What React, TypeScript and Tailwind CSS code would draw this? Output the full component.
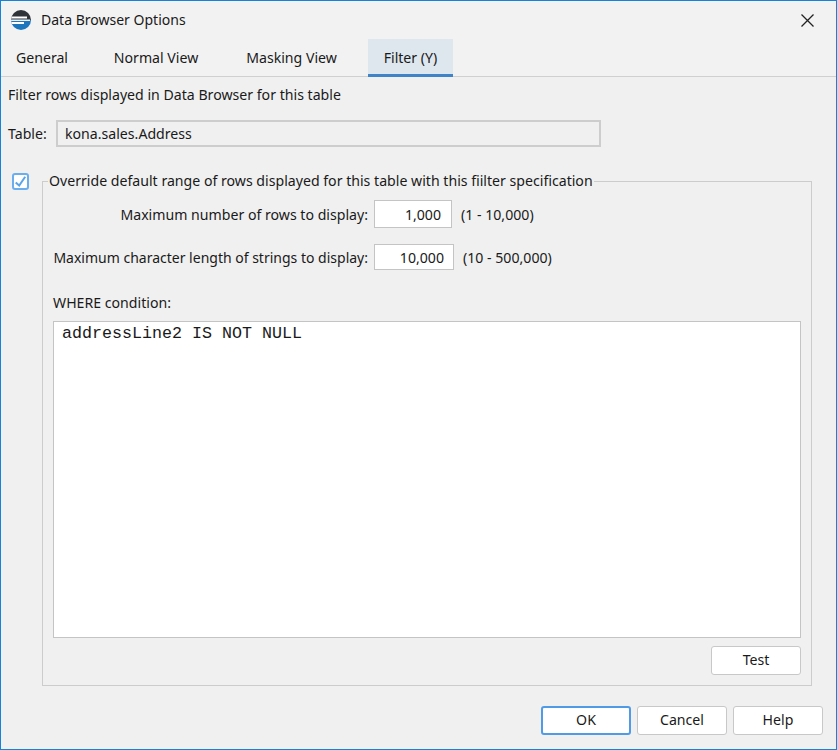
const tabs = [
    { label: 'General', width: 'w-[82px]' },
    { label: 'Normal View', width: 'w-[146px]' },
    { label: 'Masking View', width: 'w-[125px]' },
];

function AppIcon() {
    return (
        <svg width="22" height="22" viewBox="0 0 22 22" className="shrink-0">
            <defs>
                <clipPath id="globe">
                    <circle cx="11" cy="11" r="10" />
                </clipPath>
            </defs>
            <g clipPath="url(#globe)">
                <rect x="0" y="0" width="22" height="11" fill="#2f3338" />
                <rect x="0" y="11" width="22" height="11" fill="#1b76bd" />
                <rect x="0" y="7.5" width="17" height="2" fill="#ffffff" />
                <rect x="0" y="10.5" width="20" height="1.5" fill="#e8eef4" />
                <rect x="0" y="13" width="14" height="2" fill="#ffffff" />
            </g>
        </svg>
    );
}

function Button({ label, primary }: { label: string; primary?: boolean }) {
    return (
        <button
            className={
                primary
                    ? 'h-[29px] w-[90px] rounded-[3px] border-2 border-[#4f9be8] bg-white pb-[2px] text-[#1a1a1a]'
                    : 'h-[29px] w-[90px] rounded-[3px] border border-[#c8c8c8] bg-white pb-[2px] text-[#1a1a1a]'
            }
        >
            {label}
        </button>
    );
}

export default function App() {
    return (
        <div className="flex h-[750px] w-[837px] flex-col border border-[#1583d8] bg-[#f0f0f0] font-['Noto_Sans',sans-serif] text-[14.13px] text-[#1a1a1a]">
            <div className="flex h-[38px] shrink-0 items-center bg-[#f2f2f2] pl-[9px] pr-[22px]">
                <AppIcon />
                <span className="ml-[9px] text-[14.02px]">Data Browser Options</span>
                <svg width="13" height="13" viewBox="0 0 13 13" className="ml-auto">
                    <path d="M0.5 0.5 L12.5 12.5 M12.5 0.5 L0.5 12.5" fill="none" stroke="#222222" strokeWidth="1.3" />
                </svg>
            </div>

            <div className="flex h-[38px] shrink-0 border-b border-[#d0d0d0] bg-[#f2f2f2]">
                {tabs.map((tab) => (
                    <div key={tab.label} className={`${tab.width} flex items-center justify-center pt-[1px]`}>
                        {tab.label}
                    </div>
                ))}
                <div className="ml-[14px] flex h-[38px] w-[85px] items-center justify-center border-b-[3px] border-[#3f83c9] bg-[#dee6ee] pt-[3px]">
                    Filter (Y)
                </div>
            </div>

            <div className="flex min-h-0 flex-1 flex-col pl-[7px] pr-[13px]">
                <div className="mt-[7px] leading-[22px]">Filter rows displayed in Data Browser for this table</div>

                <div className="mt-[14px] flex items-center">
                    <span className="w-[48px]">Table:</span>
                    <div className="flex h-[27px] w-[545px] items-center border-2 border-[#cdcdcd] pl-[7px]">
                        kona.sales.Address
                    </div>
                </div>

                <div className="mt-[24px] flex">
                    <div className="ml-[4px] mt-[2px] flex h-[17px] w-[17px] shrink-0 items-start justify-start rounded-[3px] border-2 border-[#6aaef0] bg-white">
                        <svg width="13" height="13" viewBox="0 0 13 13">
                            <path d="M1.7 7.5 L5.2 10.6 L11.2 1.8" fill="none" stroke="#5aa4ea" strokeWidth="2" />
                        </svg>
                    </div>
                    <fieldset className="ml-[13px] h-[515px] w-[770px] border border-[#cccccc] pb-[9px] pl-[10px] pr-[9px]">
                        <legend className="-ml-[5px] px-[1px] leading-[20px]">
                            Override default range of rows displayed for this table with this fiilter specification
                        </legend>

                        <div className="mt-[9px] -ml-[1px] flex h-[28px] items-center">
                            <span className="w-[316px] whitespace-nowrap pt-[1px] text-right">Maximum number of rows to display:</span>
                            <div className="ml-[6px] flex h-[28px] w-[78px] items-center justify-end border border-[#c4c4c4] bg-white pr-[10px] pt-[1px]">
                                1,000
                            </div>
                            <span className="ml-[9px] pt-[1px]">(1 - 10,000)</span>
                        </div>

                        <div className="mt-[16px] -ml-[1px] flex h-[26px] items-center">
                            <span className="w-[316px] whitespace-nowrap pt-[1px] text-right text-[14px]">Maximum character length of strings to display:</span>
                            <div className="ml-[6px] flex h-[26px] w-[80px] items-center justify-end border border-[#c4c4c4] bg-white pr-[9px] pt-[1px]">
                                10,000
                            </div>
                            <span className="ml-[9px] pt-[1px]">(10 - 500,000)</span>
                        </div>

                        <div className="mt-[23px] leading-[20px]">WHERE condition:</div>

                        <div className="mt-[8px] h-[317px] w-[748px] border border-[#c4c4c4] bg-white px-[8px] py-[2px] font-['Liberation_Mono',monospace] text-[16.67px] leading-[20px]">
                            addressLine2 IS NOT NULL
                        </div>

                        <div className="mt-[8px] flex w-[748px] justify-end">
                            <Button label="Test" />
                        </div>
                    </fieldset>
                </div>

                <div className="mt-[20px] flex justify-end gap-[6px]">
                    <Button label="OK" primary />
                    <Button label="Cancel" />
                    <Button label="Help" />
                </div>
            </div>
        </div>
    );
}
